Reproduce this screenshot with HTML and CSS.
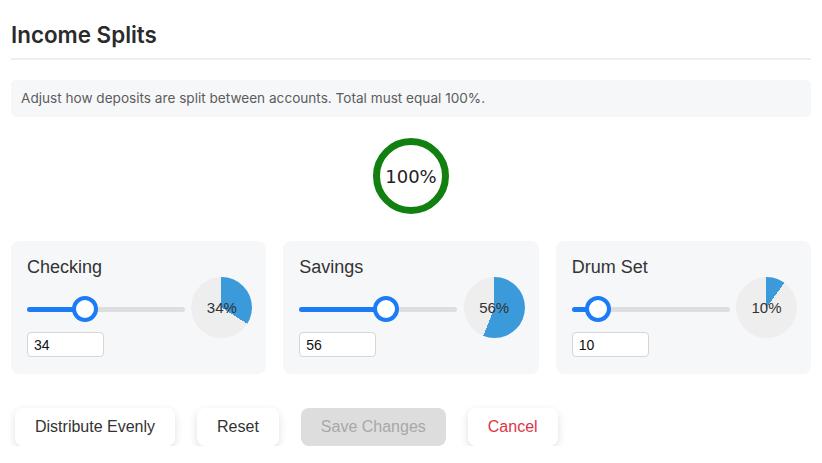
FILE: index.html
```html
<!DOCTYPE html>
<html>
<head>
    <title>Income Splits</title>
    <link rel="stylesheet" href="styles.css">
</head>
<body>
    <div class="splits-container">
        <h1 class="page-title">Income Splits</h1>

        <div class="info-box">
            Adjust how deposits are split between accounts. Total must equal 100%.
        </div>

        <div class="total-gauge">
            <span>100%</span>
        </div>

        <div class="split-cards">
            <div class="split-card">
                <div class="split-controls">
                    <div class="split-name">Checking</div>
                    <input type="range" class="split-slider" min="0" max="100" value="34" style="--v: 34">
                    <input type="text" class="split-input" value="34">
                </div>
                <div class="split-pie" style="--pct: 34%"><span>34%</span></div>
            </div>

            <div class="split-card">
                <div class="split-controls">
                    <div class="split-name">Savings</div>
                    <input type="range" class="split-slider" min="0" max="100" value="56" style="--v: 56">
                    <input type="text" class="split-input" value="56">
                </div>
                <div class="split-pie" style="--pct: 56%"><span>56%</span></div>
            </div>

            <div class="split-card">
                <div class="split-controls">
                    <div class="split-name">Drum Set</div>
                    <input type="range" class="split-slider" min="0" max="100" value="10" style="--v: 10">
                    <input type="text" class="split-input" value="10">
                </div>
                <div class="split-pie" style="--pct: 10%"><span>10%</span></div>
            </div>
        </div>

        <div class="action-row">
            <button class="btn">Distribute Evenly</button>
            <button class="btn">Reset</button>
            <button class="btn btn-disabled" disabled>Save Changes</button>
            <button class="btn btn-cancel">Cancel</button>
        </div>
    </div>
</body>
</html>
```

FILE: styles.css
```css
body {
    margin: 0;
    background: #fff;
    font-family: "Liberation Sans", Arial, sans-serif;
    color: #333;
}

.splits-container {
    padding: 0 11px;
}

.page-title {
    font-family: Inter, "Liberation Sans", sans-serif;
    font-size: 22.4px;
    font-weight: 600;
    line-height: 27px;
    color: #2b2b2b;
    margin: 21px 0 0;
    padding-bottom: 10px;
    border-bottom: 2px solid #eeeeee;
}

.info-box {
    margin-top: 20px;
    background: #f6f7f9;
    border-radius: 5px;
    padding: 10px 10px;
    font-family: Inter, "Liberation Sans", sans-serif;
    font-size: 13.6px;
    line-height: 17px;
    color: #5c5c5c;
}

.total-gauge {
    width: 76px;
    height: 76px;
    box-sizing: border-box;
    margin: 21px auto 0;
    border: 7px solid #118011;
    border-radius: 50%;
    display: flex;
    align-items: center;
    justify-content: center;
    font-family: "DejaVu Sans", sans-serif;
    font-size: 18px;
    color: #222;
}

.split-cards {
    display: grid;
    grid-template-columns: repeat(3, 1fr);
    gap: 17px;
    margin-top: 27px;
}

.split-card {
    background: #f6f7f9;
    border-radius: 8px;
    padding: 16px 14px 17px 16px;
    display: flex;
    justify-content: space-between;
    align-items: center;
}

.split-controls {
    display: flex;
    flex-direction: column;
}

.split-name {
    font-size: 18px;
    line-height: 21px;
    color: #333;
}

.split-slider {
    -webkit-appearance: none;
    appearance: none;
    width: 158px;
    height: 26px;
    margin: 18px 0 0;
    background: transparent;
}

.split-slider::-webkit-slider-runnable-track {
    height: 5px;
    border-radius: 3px;
    background: linear-gradient(to right, #1b7cf6 0, #1b7cf6 calc(13px + var(--v) * 1.32px), #dedede calc(13px + var(--v) * 1.32px));
}

.split-slider::-webkit-slider-thumb {
    -webkit-appearance: none;
    width: 26px;
    height: 26px;
    box-sizing: border-box;
    border-radius: 50%;
    background: #fff;
    border: 4px solid #1b7cf6;
    margin-top: -10.5px;
}

.split-input {
    width: 77px;
    height: 25px;
    box-sizing: border-box;
    margin-top: 10px;
    border: 1px solid #d6d6d6;
    border-radius: 4px;
    padding: 0 6px;
    font-family: "Liberation Sans", Arial, sans-serif;
    font-size: 14px;
    color: #111;
    background: #fff;
}

.split-pie {
    width: 61px;
    height: 61px;
    border-radius: 50%;
    background: conic-gradient(#3b9ad9 0 var(--pct), #eeeeee var(--pct) 100%);
    display: flex;
    align-items: center;
    justify-content: center;
    font-size: 15px;
    color: #333;
}

.action-row {
    display: flex;
    gap: 22px;
    margin-top: 34px;
    padding-left: 4px;
}

.btn {
    height: 38px;
    padding: 0 20px;
    border: none;
    border-radius: 8px;
    background: #fff;
    box-shadow: 0 3px 9px rgba(0,0,0,0.13);
    font-family: "Liberation Sans", Arial, sans-serif;
    font-size: 16px;
    color: #333;
    cursor: pointer;
}

.btn-disabled {
    background: #dddddd;
    color: #a8a8a8;
    box-shadow: none;
    cursor: default;
}

.btn-cancel {
    color: #dc3545;
}
```
